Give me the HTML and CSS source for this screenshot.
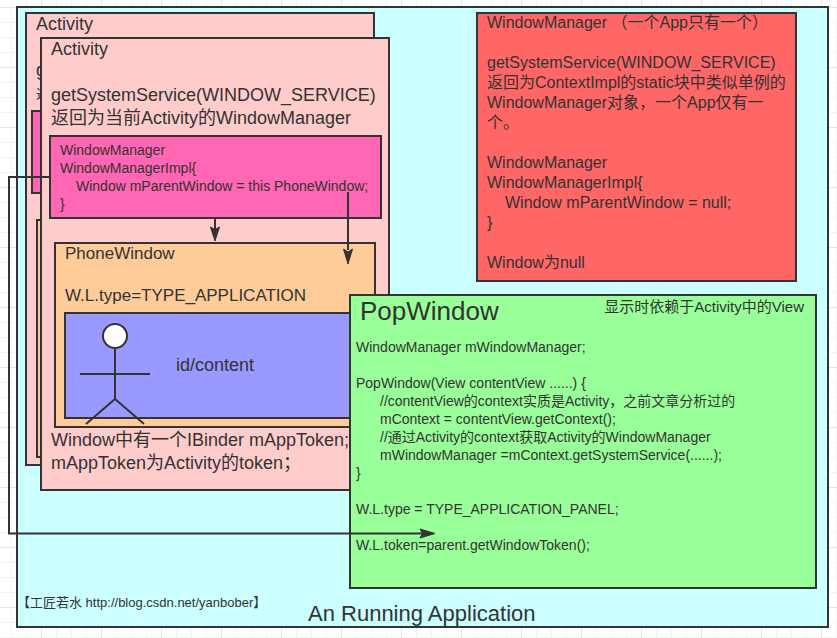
FILE: index.html
```html
<!DOCTYPE html>
<html lang="en">
<head>
    <meta charset="UTF-8">
    <title>An Running Application</title>
    <link rel="stylesheet" href="styles.css">
</head>
<body>

    <div class="canvas">

        <!-- Application -->
        <div class="node app"></div>
        <div class="app-title">An Running Application</div>
        <div class="credit">【工匠若水 http://blog.csdn.net/yanbober】</div>

        <!-- Activity de tras -->
        <div class="node activity activity-back">
            <div class="shift-up">Activity<br><br>g<br><span class="cut-char">返</span></div>
        </div>
        <div class="node pink pink-back"></div>
        <div class="node orange orange-back"></div>

        <!-- Activity da frente -->
        <div class="node activity activity-front">
            <div class="shift-up">Activity<br><br>getSystemService(WINDOW_SERVICE)<br>返回为当前Activity的WindowManager</div>
            <div class="token-text">Window中有一个IBinder mAppToken;<br>mAppToken为Activity的token；</div>
        </div>
        <div class="node pink pink-front">WindowManager<br>WindowManagerImpl{<br><span class="indent-pink">Window mParentWindow = this PhoneWindow;</span><br>}</div>
        <div class="node orange orange-front">
            <div class="shift-up">PhoneWindow<br><br>W.L.type=TYPE_APPLICATION</div>
        </div>
        <div class="node blue">id/content</div>

        <!-- WindowManager da app -->
        <div class="node red">
            <div class="shift-up">WindowManager （一个App只有一个）<br><br>getSystemService(WINDOW_SERVICE)<br>返回为ContextImpl的static块中类似单例的WindowManager对象，一个App仅有一个。<br><br>WindowManager<br>WindowManagerImpl{<br><span class="indent-red">Window mParentWindow = null;</span><br>}<br><br>Window为null</div>
        </div>

        <!-- PopWindow -->
        <div class="node green">
            <div class="green-head">
                <div class="green-title">PopWindow</div>
                <div class="green-note">显示时依赖于Activity中的View</div>
            </div>
            <div class="green-code">WindowManager mWindowManager;<br><br>PopWindow(View contentView ......) {<br><span class="indent-green">//contentView的context实质是Activity，之前文章分析过的</span><br><span class="indent-green">mContext = contentView.getContext();</span><br><span class="indent-green">//通过Activity的context获取Activity的WindowManager</span><br><span class="indent-green">mWindowManager =mContext.getSystemService(......);</span><br>}<br><br>W.L.type = TYPE_APPLICATION_PANEL;<br><br>W.L.token=parent.getWindowToken();</div>
        </div>

        <svg class="lines" width="837" height="638" viewBox="0 0 837 638">
            <path d="M50 177H9V533.500H422M215 218V230M348 192V250" fill="none" stroke="#333" stroke-width="2"/>
            <path d="M215 241L210.500 227L215 229.500L219.500 227Z M348 264L343.500 249L348 252L352.500 249Z M435 533.500L420 529L422.500 533.500L420 538Z" fill="#333" stroke="#333"/>
            <!-- boneco -->
            <circle cx="115" cy="336" r="12" fill="#fff" stroke="#333" stroke-width="2"/>
            <path d="M115 348V399M80 374H150M115 399L86 424M115 399L144 424" fill="none" stroke="#333" stroke-width="2"/>
        </svg>
    </div>

</body>
</html>
```

FILE: styles.css
```css
body {
    margin: 0;
    background-color: white;
    overflow: hidden;
}

.canvas {
    position: relative;
    width: 837px;
    height: 638px;
    overflow: hidden;
    font-family: "Liberation Sans", "Noto Sans CJK SC", sans-serif;
    color: #333;
    background-color: white;
    background-image:
        linear-gradient(#e4e4e4 1px, transparent 1px),
        linear-gradient(90deg, #e4e4e4 1px, transparent 1px),
        linear-gradient(#f3f3f3 1px, transparent 1px),
        linear-gradient(90deg, #f3f3f3 1px, transparent 1px);
    background-size: 60px 60px, 60px 60px, 15px 15px, 15px 15px;
    background-position: 0 7px, 41px 0, 0 7px, 11px 0;
}

.node {
    position: absolute;
    box-sizing: border-box;
    border: 2px solid #333;
}

.shift-up {
    margin-top: -1px;
}

.lines {
    position: absolute;
    top: 0;
    left: 0;
}

.app {
    left: 16px;
    top: 6px;
    width: 813px;
    height: 622px;
    background-color: #ccffff;
}

.app-title {
    position: absolute;
    left: 308px;
    top: 601px;
    font-size: 22px;
    line-height: 26px;
    white-space: nowrap;
}

.credit {
    position: absolute;
    left: 17px;
    top: 595px;
    font-size: 13px;
    line-height: 16px;
    white-space: nowrap;
}

.activity {
    background-color: #ffcccc;
    font-size: 18px;
    line-height: 23px;
    white-space: nowrap;
    padding-left: 9px;
}

.activity-back {
    left: 25px;
    top: 12px;
    width: 350px;
    height: 454px;
}

.activity-front {
    left: 40px;
    top: 37px;
    width: 350px;
    height: 454px;
}

.cut-char {
    font-size: 14px;
}

.token-text {
    position: absolute;
    left: 9px;
    top: 390px;
}

.pink {
    background-color: #ff66b3;
    font-size: 14px;
    line-height: 18px;
    white-space: nowrap;
}

.pink-back {
    left: 31px;
    top: 110px;
    width: 20px;
    height: 84px;
}

.pink-front {
    left: 49px;
    top: 135px;
    width: 333px;
    height: 84px;
    padding: 4px 0 0 9px;
}

.indent-pink {
    padding-left: 16px;
}

.orange {
    background-color: #ffcc99;
    white-space: nowrap;
}

.orange-back {
    left: 36px;
    top: 219px;
    width: 10px;
    height: 239px;
}

.orange-front {
    left: 54px;
    top: 242px;
    width: 322px;
    height: 186px;
    padding-left: 9px;
    font-size: 17px;
    line-height: 21px;
}

.blue {
    left: 64px;
    top: 312px;
    width: 300px;
    height: 107px;
    padding: 41px 0 0 110px;
    background-color: #9999ff;
    font-size: 18px;
    line-height: 20px;
}

.red {
    left: 476px;
    top: 12px;
    width: 321px;
    height: 270px;
    padding: 0 9px;
    background-color: #ff6666;
    font-size: 16px;
    line-height: 20px;
}

.indent-red {
    padding-left: 18px;
}

.green {
    left: 349px;
    top: 294px;
    width: 468px;
    height: 295px;
    padding-left: 5px;
    background-color: #99ff99;
}

.green-head {
    display: flex;
    justify-content: space-between;
    padding-right: 11px;
    padding-left: 4px;
}

.green-title {
    font-size: 26px;
    line-height: 30px;
}

.green-note {
    font-size: 15px;
    line-height: 20px;
    padding-top: 1px;
}

.green-code {
    margin-top: 12px;
    font-size: 14px;
    line-height: 18px;
    white-space: nowrap;
}

.indent-green {
    padding-left: 24px;
}
```
